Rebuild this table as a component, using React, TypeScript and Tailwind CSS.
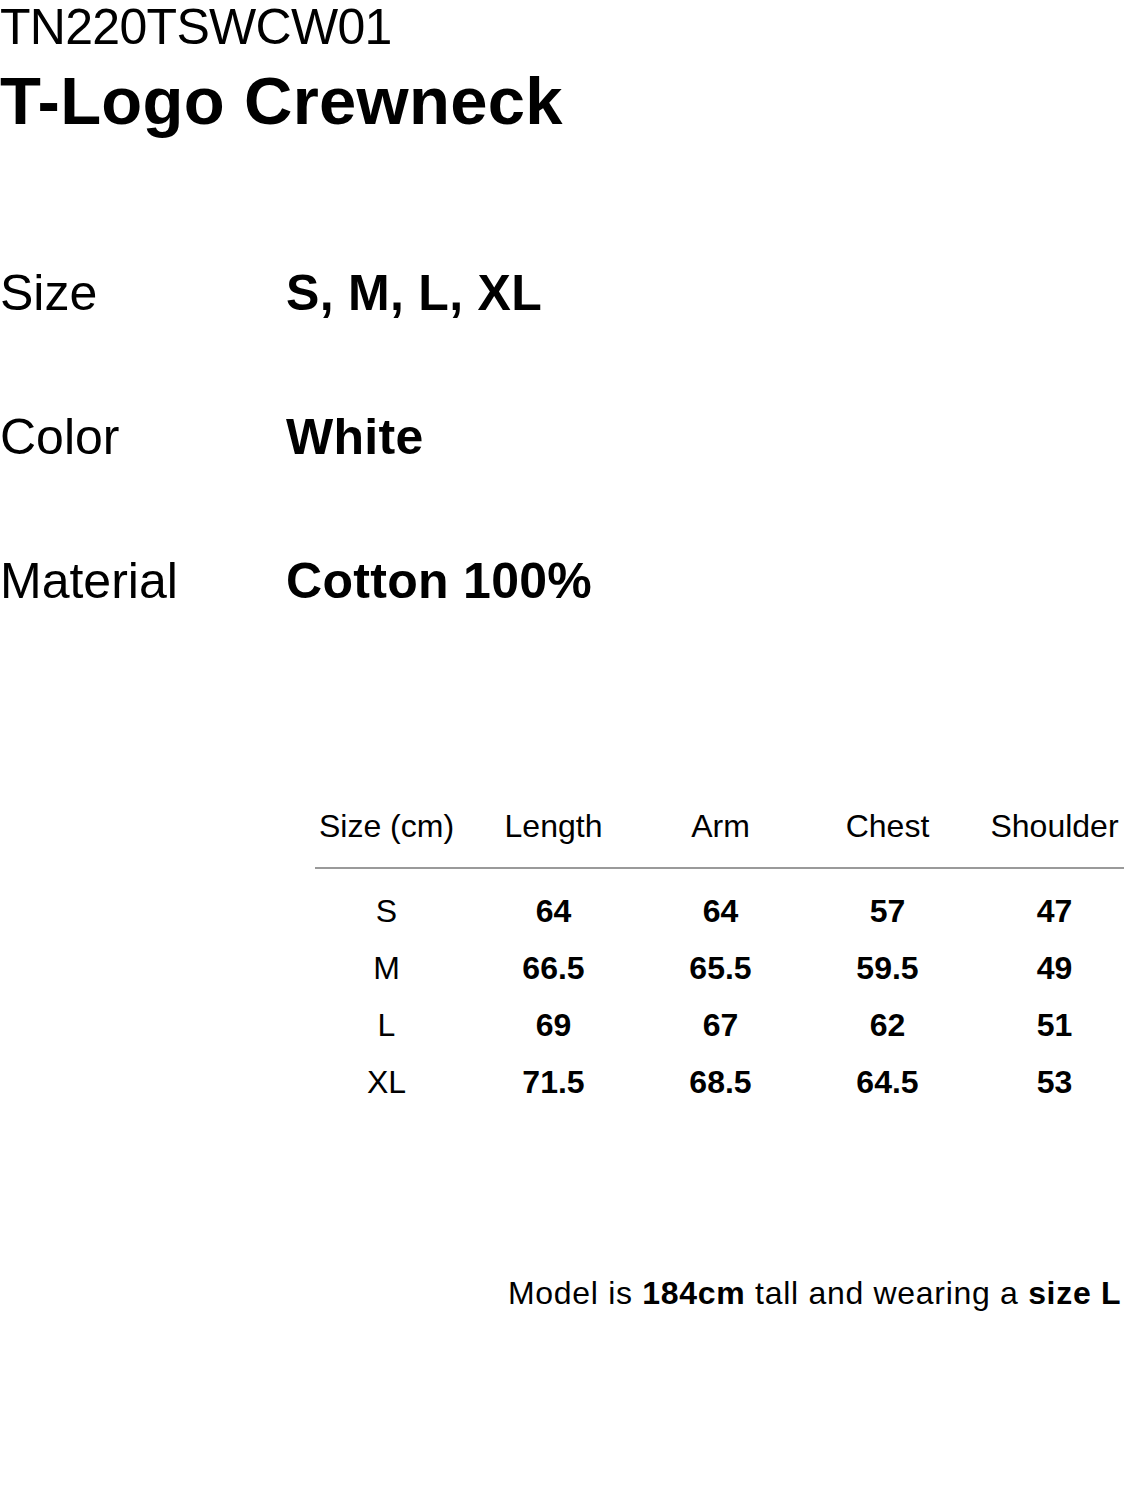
const details = [
  { label: "Size", value: "S, M, L, XL" },
  { label: "Color", value: "White" },
  { label: "Material", value: "Cotton 100%" },
];

const columns = ["Size (cm)", "Length", "Arm", "Chest", "Shoulder"];

const rows = [
  ["S", "64", "64", "57", "47"],
  ["M", "66.5", "65.5", "59.5", "49"],
  ["L", "69", "67", "62", "51"],
  ["XL", "71.5", "68.5", "64.5", "53"],
];

const App = () => {
  return (
    <div
      className="w-[1124px] h-[1500px] overflow-hidden bg-white text-black"
      style={{ fontFamily: '"Liberation Sans", Arial, Helvetica, sans-serif' }}
    >
      <div className="pt-[2px]">
        <p className="text-[50px] leading-none tracking-[-0.7px]">TN220TSWCW01</p>
        <h1 className="mt-[15px] text-[67px] leading-none font-bold tracking-[0.3px]">T-Logo Crewneck</h1>
      </div>

      <div className="mt-[134px] flex flex-col gap-[94px]">
        {details.map((item) => (
          <div key={item.label} className="flex text-[50px] leading-none">
            <span className="w-[286px] shrink-0">{item.label}</span>
            <span className="font-bold tracking-[0.3px]">{item.value}</span>
          </div>
        ))}
      </div>

      <div className="mt-[204px] ml-[303px] w-[835px]">
        <div className="grid grid-cols-[repeat(5,167px)] text-[32px] leading-none">
          {columns.map((col) => (
            <span key={col} className="text-center whitespace-nowrap">
              {col}
            </span>
          ))}
        </div>
        <div className="ml-[12px] mt-[25px] h-[2px] bg-[#9a9a9a]" />
        <div className="mt-[14px]">
          {rows.map((row) => (
            <div key={row[0]} className="grid grid-cols-[repeat(5,167px)] text-[32px] leading-[57px]">
              {row.map((cell, i) => (
                <span key={i} className={i === 0 ? "text-center" : "text-center font-bold"}>
                  {cell}
                </span>
              ))}
            </div>
          ))}
        </div>
      </div>

      <p className="mt-[166px] ml-[508px] whitespace-nowrap text-[32px] leading-none tracking-[0.7px]">
        Model is <span className="font-bold">184cm</span> tall and wearing a{" "}
        <span className="font-bold">size L</span>
      </p>
    </div>
  );
};

export default App;
